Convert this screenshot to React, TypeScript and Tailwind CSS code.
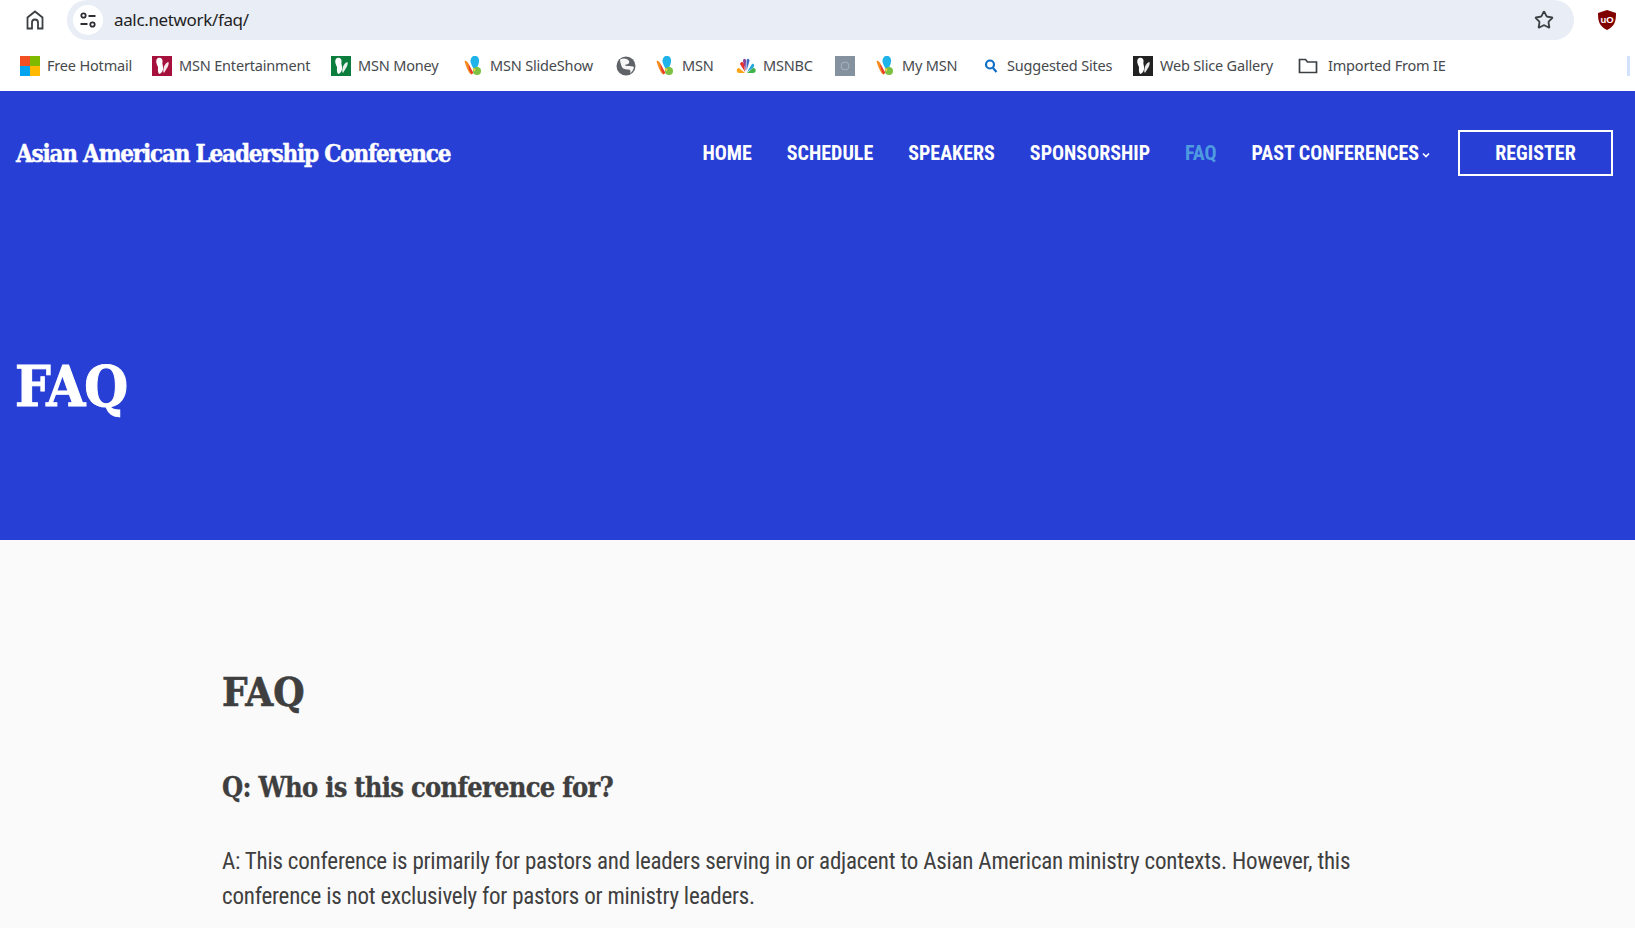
import React from "react";
import { Star } from "lucide-react";

const Win = () => (
  <svg width="20" height="20" viewBox="0 0 20 20"><rect width="10" height="10" fill="#f25022"/><rect x="10" width="10" height="10" fill="#7fba00"/><rect y="10" width="10" height="10" fill="#00a4ef"/><rect x="10" y="10" width="10" height="10" fill="#ffb900"/></svg>
);
const Fly = ({ bg }: { bg: string }) => (
  <svg width="20" height="20" viewBox="0 0 20 20"><rect width="20" height="20" fill={bg}/><path d="M6 2c3-1 5 1 4.500 4-.5 2 .5 3 .5 5 .5 3-1 6-3.500 7C5.500 17 6 13 6 11 4.500 8 3 4 6 2z" fill="#fff"/><path d="M16.500 6c1 3-2 7-4.500 11-1.500-1.500-.5-4.500 0-6.500 1-2 2.500-4.500 4.500-4.500z" fill="#fff" opacity=".9"/></svg>
);
const Msn = () => (
  <svg width="20" height="20" viewBox="1.500 0 20 20">
    <path d="M2 5c2-1 4 2 5 5l3 8c-1 1-2 0-3-1-2-3-4-8-5-12z" fill="#f58a1f"/>
    <path d="M6 8l5 9-2 1c-2-2-3-6-3-10z" fill="#e8392c"/>
    <path d="M11 0c4-1 6 2 5.500 6-.5 3-2 6-4 9C10 11 7.500 7 8 4c.5-2 1.500-3.500 3-4z" fill="#1fb3ea"/>
    <circle cx="14.500" cy="15" r="4" fill="#7cc142"/>
    <path d="M10 12l2 4 1-3z" fill="#f3d23c"/>
  </svg>
);
const Globe = () => (
  <svg width="20" height="20" viewBox="0 0 20 20"><circle cx="10" cy="10" r="9.500" fill="#5f6368"/><path d="M4 3.500C8 1.500 12 3 13 5c1 2-1 3.500-3 3.500-1.500 0-1 1.500 1 1.500 3 0 6 0 7 1-.5 3-2 5-4 6.500 1-2 .5-4-2-4-3 0-6-1-6.500-3.500C5 8 4 6 4 3.500z" fill="#fff" opacity=".95"/></svg>
);
const Nbc = () => (
  <svg width="20" height="20" viewBox="0 0 20 20">
    <path d="M9 17H3C0 17 0 12 3 12z" fill="#f8a51b"/>
    <path d="M9 16L4 8c1-3 4-2 4 0z" fill="#e8352c"/>
    <path d="M9.500 15L7 5c0-3 3-3 3 0z" fill="#8a3f98"/>
    <path d="M10.500 15L10.500 5c0-3 3-3 3 0z" fill="#3f6fc4"/>
    <path d="M11 16l5-8c2-1 3 2 1 4z" fill="#23a5dd"/>
    <path d="M11 17l6-5c3-1 4 5 0 5z" fill="#3fb34a"/>
  </svg>
);
const Search = () => (
  <svg width="16" height="16" viewBox="0 0 16 16" fill="none" stroke="#0f6fc6" strokeWidth="2.200"><circle cx="7" cy="6.500" r="4"/><path d="M10 10l3.500 4"/></svg>
);
const Folder = () => (
  <svg width="20" height="20" viewBox="0 0 20 20" fill="none" stroke="#3c4043" strokeWidth="1.700"><path d="M1.500 3.500h6l2 2.500h9v10.500h-17z"/></svg>
);
const Tile = () => (
  <svg width="20" height="20" viewBox="0 0 20 20"><rect width="20" height="20" fill="#84929f"/><circle cx="10" cy="10" r="4" fill="none" stroke="#a7b2bc"/></svg>
);

const Book = ({ icon, label, w, gap = "gap-[7px]" }: { icon: React.ReactNode; label?: string; w: string; gap?: string }) => (
  <div className={`flex items-center shrink-0 ${gap} ${w}`}>
    <span className="flex w-5 h-5 items-center justify-center shrink-0">{icon}</span>
    {label && <span className="text-[14.5px] text-[#46494d] whitespace-nowrap font-['Noto_Sans',sans-serif] tracking-[-0.18px]">{label}</span>}
  </div>
);

const cond = "font-['Roboto',sans-serif] [font-stretch:75%]";
const slab = "font-['DejaVu_Serif_Condensed','DejaVu_Serif',serif] font-bold";

export default function App() {
  return (
    <div className="w-[1635px] h-[928px] overflow-hidden bg-[#fafafa] flex flex-col">
      <div className="h-[91px] bg-white flex flex-col shrink-0">
        <div className="h-10 flex items-center">
          <div className="w-[67px] flex justify-center pl-[2px]">
            <svg width="18" height="20" viewBox="0 0 18 20" fill="none" stroke="#3c4043" strokeWidth="1.800"><path d="M1.500 18.500V7.500L9 1.500l7.500 6v11h-4.500v-6a3 3 0 0 0-6 0v6z"/></svg>
          </div>
          <div className="w-[1507px] h-10 bg-[#e9edf6] rounded-[20px] flex items-center pl-[6px] pr-[20px]">
              <div className="w-[30px] h-[30px] rounded-full bg-white flex items-center justify-center mr-[11px]">
                <svg width="18" height="18" viewBox="0 0 18 18" fill="none" stroke="#2d2f33" strokeWidth="1.800"><circle cx="4.500" cy="4.500" r="2.200"/><path d="M9.500 5h7M1.500 13h7"/><circle cx="13.500" cy="13.500" r="2.200"/></svg>
              </div>
              <span className="text-[17px] text-[#1f1f1f] font-['Noto_Sans',sans-serif] tracking-[-0.35px] flex-1">aalc.network/faq/</span>
              <Star size={20} color="#3c4043" strokeWidth={2.200}/>
          </div>
          <div className="flex-1 flex justify-center pl-[4px]">
            <svg width="20" height="22" viewBox="0 0 20 22"><path d="M10 1l9 3c0 8-1 13-9 17C2 17 1 12 1 4z" fill="#800000"/><text x="10" y="14" textAnchor="middle" fontSize="9.500" fontWeight="700" fill="#fff" fontFamily="Liberation Sans">uO</text></svg>
          </div>
        </div>
        <div className="flex-1 flex items-center pl-[20px] relative">
          <Book icon={<Win/>} label="Free Hotmail" w="w-[132px]"/>
          <Book icon={<Fly bg="#a5103d"/>} label="MSN Entertainment" w="w-[179px]"/>
          <Book icon={<Fly bg="#0b7d3c"/>} label="MSN Money" w="w-[133px]"/>
          <Book icon={<Msn/>} label="MSN SlideShow" w="w-[152px]" gap="gap-[6px]"/>
          <Book icon={<Globe/>} w="w-[40px]"/>
          <Book icon={<Msn/>} label="MSN" w="w-[80px]" gap="gap-[6px]"/>
          <Book icon={<Nbc/>} label="MSNBC" w="w-[99px]"/>
          <Book icon={<Tile/>} w="w-[41px]"/>
          <Book icon={<Msn/>} label="My MSN" w="w-[105px]" gap="gap-[6px]"/>
          <Book icon={<Search/>} label="Suggested Sites" w="w-[152px]" gap="gap-[6px]"/>
          <Book icon={<Fly bg="#222"/>} label="Web Slice Gallery" w="w-[165px]"/>
          <Book icon={<Folder/>} label="Imported From IE" w="w-[160px]" gap="gap-[10px]"/>
          <div className="absolute right-[5px] top-[16px] w-[3px] h-[20px] bg-[#d3e3fd]"/>
        </div>
      </div>

      <div className="h-[449px] bg-[#283fd6] shrink-0 flex flex-col pl-4 pr-[22px]">
        <div className="h-[124px] flex items-center justify-between">
          <span className={`${slab} text-white text-[24px] tracking-[-1.2px] whitespace-nowrap mt-[2px] [-webkit-text-stroke:0.4px_white]`}>Asian American Leadership Conference</span>
          <div className={`${cond} flex items-center font-bold text-white text-[20px] uppercase whitespace-nowrap`}>
            <span className="mr-[35px]">Home</span>
            <span className="mr-[35px]">Schedule</span>
            <span className="mr-[35px]">Speakers</span>
            <span className="mr-[35px]">Sponsorship</span>
            <span className="mr-[35px] text-[#4f9be0]">FAQ</span>
            <span className="mr-[28px] flex items-center">Past Conferences
              <svg className="ml-[3px] mt-[3px]" width="8" height="6" viewBox="0 0 8 6" fill="none" stroke="#fff" strokeWidth="1.600"><path d="M1 1.500l3 3 3-3"/></svg>
            </span>
            <span className="w-[155px] h-[46px] border-2 border-white flex items-center justify-center">Register</span>
          </div>
        </div>
        <h1 className={`${slab} text-white text-[56px] leading-none mt-[143px] tracking-[-1.2px] -ml-px [-webkit-text-stroke:1px_white]`}>FAQ</h1>
      </div>

      <div className="pl-[222px] w-[1370px]">
        <h2 className={`${slab} text-[#3f3f3f] text-[40px] leading-none mt-[132px] tracking-[0px] [-webkit-text-stroke:0.6px_#3f3f3f]`}>FAQ</h2>
        <h3 className={`${slab} text-[#3f3f3f] text-[27px] leading-none mt-[62px] tracking-[-0.72px] [-webkit-text-stroke:0.3px_#3f3f3f]`}>Q: Who is this conference for?</h3>
        <p className={`${cond} text-[#3f3f3f] text-[23px] leading-[35px] mt-[43px] font-normal tracking-[-0.215px]`}>A: This conference is primarily for pastors and leaders serving in or adjacent to Asian American ministry contexts. However, this conference is not exclusively for pastors or ministry leaders.</p>
      </div>
    </div>
  );
}
